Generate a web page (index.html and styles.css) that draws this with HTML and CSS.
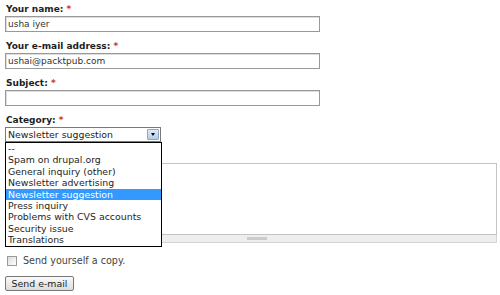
FILE: index.html
```html
<!DOCTYPE html>
<html lang="en">
<head>
    <meta charset="UTF-8">
    <title>Contact</title>
    <link rel="stylesheet" href="styles.css">
</head>
<body>
    <form class="contact-form">
        <div class="form-item">
            <label>Your name: <span class="req">*</span></label>
            <input type="text" class="form-text" value="usha iyer">
        </div>
        <div class="form-item">
            <label>Your e-mail address: <span class="req">*</span></label>
            <input type="text" class="form-text" value="ushai@packtpub.com">
        </div>
        <div class="form-item">
            <label>Subject: <span class="req">*</span></label>
            <input type="text" class="form-text" value="">
        </div>
        <div class="form-item">
            <label>Category: <span class="req">*</span></label>
            <div class="select-wrap">
                <div class="form-select">
                    <span>Newsletter suggestion</span>
                    <span class="arrow"></span>
                </div>
                <ul class="options">
                    <li>--</li>
                    <li>Spam on drupal.org</li>
                    <li>General inquiry (other)</li>
                    <li>Newsletter advertising</li>
                    <li class="selected">Newsletter suggestion</li>
                    <li>Press inquiry</li>
                    <li>Problems with CVS accounts</li>
                    <li>Security issue</li>
                    <li>Translations</li>
                </ul>
            </div>
        </div>
        <div class="form-item">
            <!-- label sits under the open dropdown -->
            <div class="label-space"></div>
            <div class="resizable">
                <textarea class="form-textarea"></textarea>
                <div class="grippie"><span></span></div>
            </div>
        </div>
        <div class="form-check">
            <span class="checkbox"></span>
            <span>Send yourself a copy.</span>
        </div>
        <button type="button" class="form-submit">Send e-mail</button>
    </form>
</body>
</html>
```

FILE: styles.css
```css
body {
    margin: 0;
    padding: 3px 5px;
    font-family: "DejaVu Sans", Verdana, sans-serif;
    font-size: 9px;
    color: #333;
    background: #fff;
}
.form-item {
    margin-bottom: 8px;
}
.form-item label {
    display: block;
    font-weight: bold;
    font-size: 9px;
    line-height: 13px;
    color: #1e1e1e;
    padding-left: 1px;
}
.label-space {
    height: 13px;
}
.req {
    color: #c33;
}
.form-text {
    display: block;
    box-sizing: border-box;
    width: 315px;
    height: 16px;
    margin: 0;
    padding: 0 2px;
    border: 1px solid #999;
    box-shadow: inset 1px 1px 0 #ddd;
    font-family: "DejaVu Sans", Verdana, sans-serif;
    font-size: 9px;
    color: #333;
    outline: none;
}
.select-wrap {
    position: relative;
    width: 156px;
}
.form-select {
    display: flex;
    align-items: center;
    justify-content: space-between;
    box-sizing: border-box;
    height: 15px;
    border: 1px solid #7a7a7a;
    padding: 0 1px 0 2px;
    font-size: 9.4px;
    color: #222;
}
.arrow {
    position: relative;
    box-sizing: border-box;
    width: 12px;
    height: 11px;
    border: 1px solid #8fa6c0;
    border-radius: 1px;
    background: linear-gradient(#dfeaf7, #b6cce6);
}
.arrow::after {
    content: "";
    position: absolute;
    left: 3px;
    top: 3px;
    border-left: 2.5px solid transparent;
    border-right: 2.5px solid transparent;
    border-top: 3px solid #000;
}
.options {
    position: absolute;
    left: 0;
    top: 15px;
    z-index: 2;
    width: 157px;
    margin: 0;
    padding: 0;
    list-style: none;
    background: #fff;
    border: 1px solid #000;
    box-sizing: border-box;
}
.options li {
    height: 11.4px;
    line-height: 11.4px;
    padding-left: 2px;
    font-size: 9.4px;
    color: #1e1e1e;
    white-space: nowrap;
}
.options li.selected {
    background: #3399ff;
    color: #fff;
}
.resizable {
    width: 492px;
}
.form-textarea {
    display: block;
    box-sizing: border-box;
    width: 100%;
    height: 72px;
    margin: 0;
    border: 1px solid #c4c4c4;
    resize: none;
    outline: none;
}
.grippie {
    display: flex;
    justify-content: center;
    align-items: center;
    height: 8px;
    background: #eee;
    border: 1px solid #d4d4d4;
    border-top: none;
    box-sizing: border-box;
}
.grippie span {
    width: 20px;
    height: 3px;
    background: #ccc;
    margin-left: 12px;
}
.form-check {
    display: flex;
    align-items: center;
    gap: 6px;
    margin: 12px 0 0 2px;
    color: #444;
    font-size: 9.6px;
}
.checkbox {
    box-sizing: border-box;
    width: 10px;
    height: 10px;
    border: 1px solid #999;
    background: linear-gradient(135deg, #ddd, #fff);
}
.form-submit {
    display: block;
    margin-top: 10px;
    box-sizing: border-box;
    width: 69px;
    height: 15px;
    padding: 0;
    border: 1px solid #777;
    border-radius: 2px;
    background: linear-gradient(#fafafa, #dcdcdc);
    font-family: "DejaVu Sans", Verdana, sans-serif;
    font-size: 9.4px;
    color: #222;
}
```
